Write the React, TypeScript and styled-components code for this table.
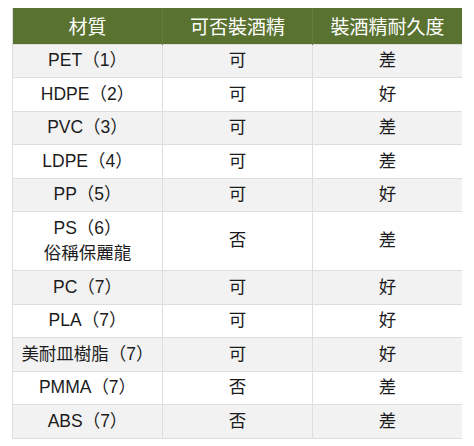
import styled, { createGlobalStyle } from "styled-components";

const GlobalStyle = createGlobalStyle`
  body {
    margin: 8px 12px;
    background: #ffffff;
    font-family: "Liberation Sans", "Noto Sans CJK TC", sans-serif;
  }
`;

interface RowData {
  material: string[];
  canHold: string;
  durability: string;
}

const rows: RowData[] = [
  { material: ["PET（1）"], canHold: "可", durability: "差" },
  { material: ["HDPE（2）"], canHold: "可", durability: "好" },
  { material: ["PVC（3）"], canHold: "可", durability: "差" },
  { material: ["LDPE（4）"], canHold: "可", durability: "差" },
  { material: ["PP（5）"], canHold: "可", durability: "好" },
  { material: ["PS（6）", "俗稱保麗龍"], canHold: "否", durability: "差" },
  { material: ["PC（7）"], canHold: "可", durability: "好" },
  { material: ["PLA（7）"], canHold: "可", durability: "好" },
  { material: ["美耐皿樹脂（7）"], canHold: "可", durability: "好" },
  { material: ["PMMA（7）"], canHold: "否", durability: "差" },
  { material: ["ABS（7）"], canHold: "否", durability: "差" },
];

const App = () => {
  return (
    <>
      <GlobalStyle />
      <Table>
        <colgroup>
          <col width="150" />
          <col width="150" />
          <col width="150" />
        </colgroup>
        <thead>
          <tr>
            <HeadCell>材質</HeadCell>
            <HeadCell>可否裝酒精</HeadCell>
            <HeadCell>裝酒精耐久度</HeadCell>
          </tr>
        </thead>
        <tbody>
          {rows.map((row, i) => (
            <Row key={i} $striped={i % 2 === 0}>
              <Cell>
                {row.material.map((line, j) => (
                  <Line key={j}>{line}</Line>
                ))}
              </Cell>
              <Cell>{row.canHold}</Cell>
              <Cell>{row.durability}</Cell>
            </Row>
          ))}
        </tbody>
      </Table>
    </>
  );
};

export default App;

const Table = styled.table`
  width: 450px;
  table-layout: fixed;
  border-collapse: collapse;
  border: 1px solid #dedede;
  border-top: none;
`;

const HeadCell = styled.th`
  height: 36px;
  padding: 0 6px;
  box-sizing: border-box;
  background: #5a7230;
  color: #ffffff;
  font-family: "Noto Sans CJK TC", sans-serif;
  font-size: 19px;
  font-weight: 400;
  line-height: 24px;
  text-align: center;
  border-left: 1px solid #677d40;
  &:first-child {
    border-left: none;
  }
`;

const Row = styled.tr<{ $striped: boolean }>`
  background: ${(p) => (p.$striped ? "#f2f2f2" : "#ffffff")};
`;

const Cell = styled.td`
  padding: 3.5px 6px;
  font-size: 17.5px;
  line-height: 25.5px;
  color: #1c1c1c;
  text-align: center;
  vertical-align: middle;
  border: 1px solid #dedede;
`;

const Line = styled.div`
  white-space: nowrap;
`;
